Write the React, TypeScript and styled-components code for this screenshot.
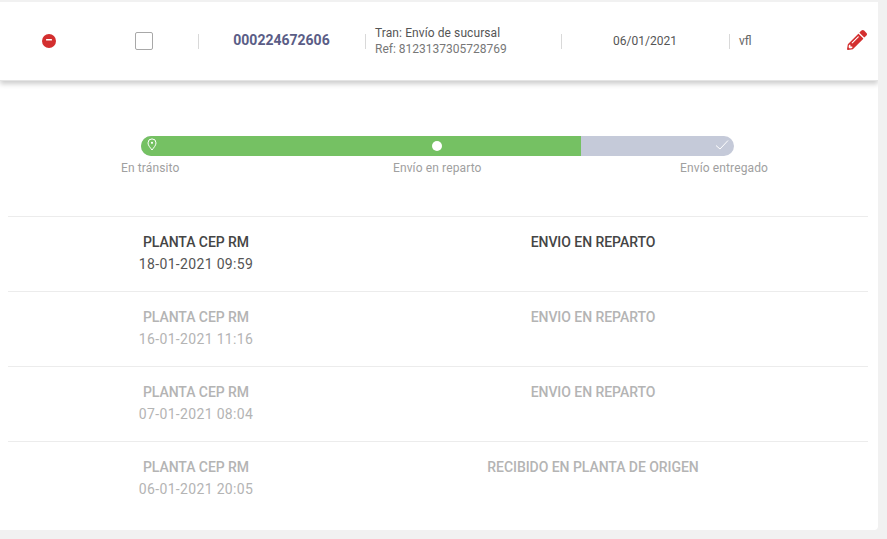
import React, { ReactElement } from "react";
import styled, { createGlobalStyle } from "styled-components";
import { FaPencilAlt } from "react-icons/fa";

const GlobalStyle = createGlobalStyle`
  html, body {
    margin: 0;
    padding: 0;
    background: #f1f1f1;
    font-family: Roboto, "Liberation Sans", sans-serif;
    overflow: hidden;
  }
`;

const Card = styled.div`
  width: 878px;
  height: 528px;
  margin-top: 2px;
  background: #fff;
  border-bottom-right-radius: 4px;
  overflow: hidden;
`;

const Header = styled.div`
  display: grid;
  grid-template-columns: 98px 100px 167px 196px 168px 120px 29px;
  align-items: center;
  height: 79px;
  background: #fff;
  box-shadow: 0 3px 5px rgba(0, 0, 0, 0.2);
  border-bottom: 1px solid #e4e4e4;
  box-sizing: border-box;
  color: #555;
  font-size: 12px;
`;

const Cell = styled.div<{ $center?: boolean; $sep?: boolean }>`
  position: relative;
  display: flex;
  flex-direction: column;
  justify-content: center;
  align-items: ${(p) => (p.$center ? "center" : "flex-start")};

  &::before {
    content: "";
    display: ${(p) => (p.$sep ? "block" : "none")};
    position: absolute;
    left: 0;
    top: 50%;
    width: 1px;
    height: 15px;
    margin-top: -7px;
    background: #d9d9d9;
  }
`;

const CheckBox = styled.span`
  display: block;
  width: 16px;
  height: 16px;
  border: 1px solid #a8a8a8;
  border-radius: 2px;
  margin-left: -9px;
`;

const TrackNumber = styled.span`
  font-size: 14px;
  font-weight: 700;
  color: #5a5d86;
  margin-top: -3px;
`;

const TranCell = styled(Cell)`
  padding-left: 10px;
`;

const TranLines = styled.div`
  line-height: 16px;
  white-space: nowrap;
`;

const TranLine = styled.div`
  letter-spacing: 0.09px;
`;

const RefLine = styled.div`
  color: #777;
`;

const UserCell = styled(Cell)`
  padding-left: 10px;
  color: #666;
`;

const PencilCell = styled(Cell)`
  padding-right: 14px;
  margin-top: -3px;
`;

const Tracker = styled.div`
  width: 647px;
  margin: 55px 0 0 121px;
`;

const Bar = styled.div`
  position: relative;
  height: 20px;
  margin-left: 20px;
  width: 593px;
  border-radius: 10px;
  overflow: hidden;
  background: #c5cad9;
`;

const BarFill = styled.div`
  position: absolute;
  inset: 0 auto 0 0;
  background: #75c163;
`;

const BarIcons = styled.div`
  position: absolute;
  inset: 0;
  display: flex;
  align-items: center;
  justify-content: space-between;
  padding: 0 5px 0 6px;
`;

const Pin = styled.span`
  display: flex;
  margin-top: -3px;
`;

const Dot = styled.span`
  width: 10px;
  height: 10px;
  border-radius: 50%;
  background: #fff;
  margin-left: 2px;
`;

const Tick = styled.span`
  display: flex;
  margin-top: -2px;
`;

const StepLabels = styled.div`
  display: grid;
  grid-template-columns: 272px 1fr auto;
  margin-top: 5px;
  font-size: 12px;
  line-height: 14px;
  letter-spacing: 0.12px;
  color: #a0a0a0;
`;

const History = styled.div`
  margin: 41px 10px 0 8px;
`;

const Row = styled.div<{ $active?: boolean }>`
  display: grid;
  grid-template-columns: 376px 418px;
  height: 75px;
  box-sizing: border-box;
  padding-top: 14px;
  border-top: 1px solid #ececec;
  text-align: center;
  color: ${(p) => (p.$active ? "#454545" : "#b4b4b4")};
  font-size: 14px;
  line-height: 22px;
`;

const Strong = styled.div`
  font-weight: 500;
  letter-spacing: -0.05px;
`;

const Stamp = styled.div<{ $active?: boolean }>`
  letter-spacing: 0.33px;
  color: ${(p) => (p.$active ? "#555" : "#b4b4b4")};
`;

const StopIcon = () => (
  <svg width="14" height="14" viewBox="0 0 14 14">
    <circle cx="7" cy="7" r="7" fill="#d32f2f" />
    <rect x="4" y="5" width="6" height="1.6" rx="0.6" fill="#fff" />
  </svg>
);

const PinIcon = () => (
  <svg width="10" height="13" viewBox="0 0 10 13" fill="none" stroke="#fff" strokeWidth="1">
    <path d="M5 12 C3.5 9.8 1 7.6 1 4.9 A4 4 0 0 1 9 4.9 C9 7.6 6.5 9.8 5 12 Z" />
    <circle cx="5" cy="4.8" r="1.1" fill="#fff" stroke="none" />
  </svg>
);

const CheckIcon = () => (
  <svg width="14" height="12" viewBox="0 0 14 12" fill="none" stroke="#fff" strokeWidth="1">
    <path d="M1 6.5 L5 10 L13 1.5" />
  </svg>
);

const events = [
  { place: "PLANTA CEP RM", date: "18-01-2021 09:59", status: "ENVIO EN REPARTO", active: true },
  { place: "PLANTA CEP RM", date: "16-01-2021 11:16", status: "ENVIO EN REPARTO" },
  { place: "PLANTA CEP RM", date: "07-01-2021 08:04", status: "ENVIO EN REPARTO" },
  { place: "PLANTA CEP RM", date: "06-01-2021 20:05", status: "RECIBIDO EN PLANTA DE ORIGEN" },
];

export default function App(): ReactElement {
  return (
    <Card>
      <GlobalStyle />
      <Header>
        <Cell $center>
          <StopIcon />
        </Cell>
        <Cell $center>
          <CheckBox />
        </Cell>
        <Cell $center $sep>
          <TrackNumber>000224672606</TrackNumber>
        </Cell>
        <TranCell $sep>
          <TranLines>
            <TranLine>Tran: Envío de sucursal</TranLine>
            <RefLine>Ref: 8123137305728769</RefLine>
          </TranLines>
        </TranCell>
        <Cell $center $sep>
          <span>06/01/2021</span>
        </Cell>
        <UserCell $sep>vfl</UserCell>
        <PencilCell $center>
          <FaPencilAlt size={20} color="#d32f2f" />
        </PencilCell>
      </Header>

      <Tracker>
        <Bar>
          <BarFill style={{ width: `${(440 / 593) * 100}%` }} />
          <BarIcons>
            <Pin>
              <PinIcon />
            </Pin>
            <Dot />
            <Tick>
              <CheckIcon />
            </Tick>
          </BarIcons>
        </Bar>
        <StepLabels>
          <span>En tránsito</span>
          <span>Envío en reparto</span>
          <span>Envío entregado</span>
        </StepLabels>
      </Tracker>

      <History>
        {events.map((e) => (
          <Row key={e.date} $active={e.active}>
            <div>
              <Strong>{e.place}</Strong>
              <Stamp $active={e.active}>{e.date}</Stamp>
            </div>
            <Strong>{e.status}</Strong>
          </Row>
        ))}
      </History>
    </Card>
  );
}
